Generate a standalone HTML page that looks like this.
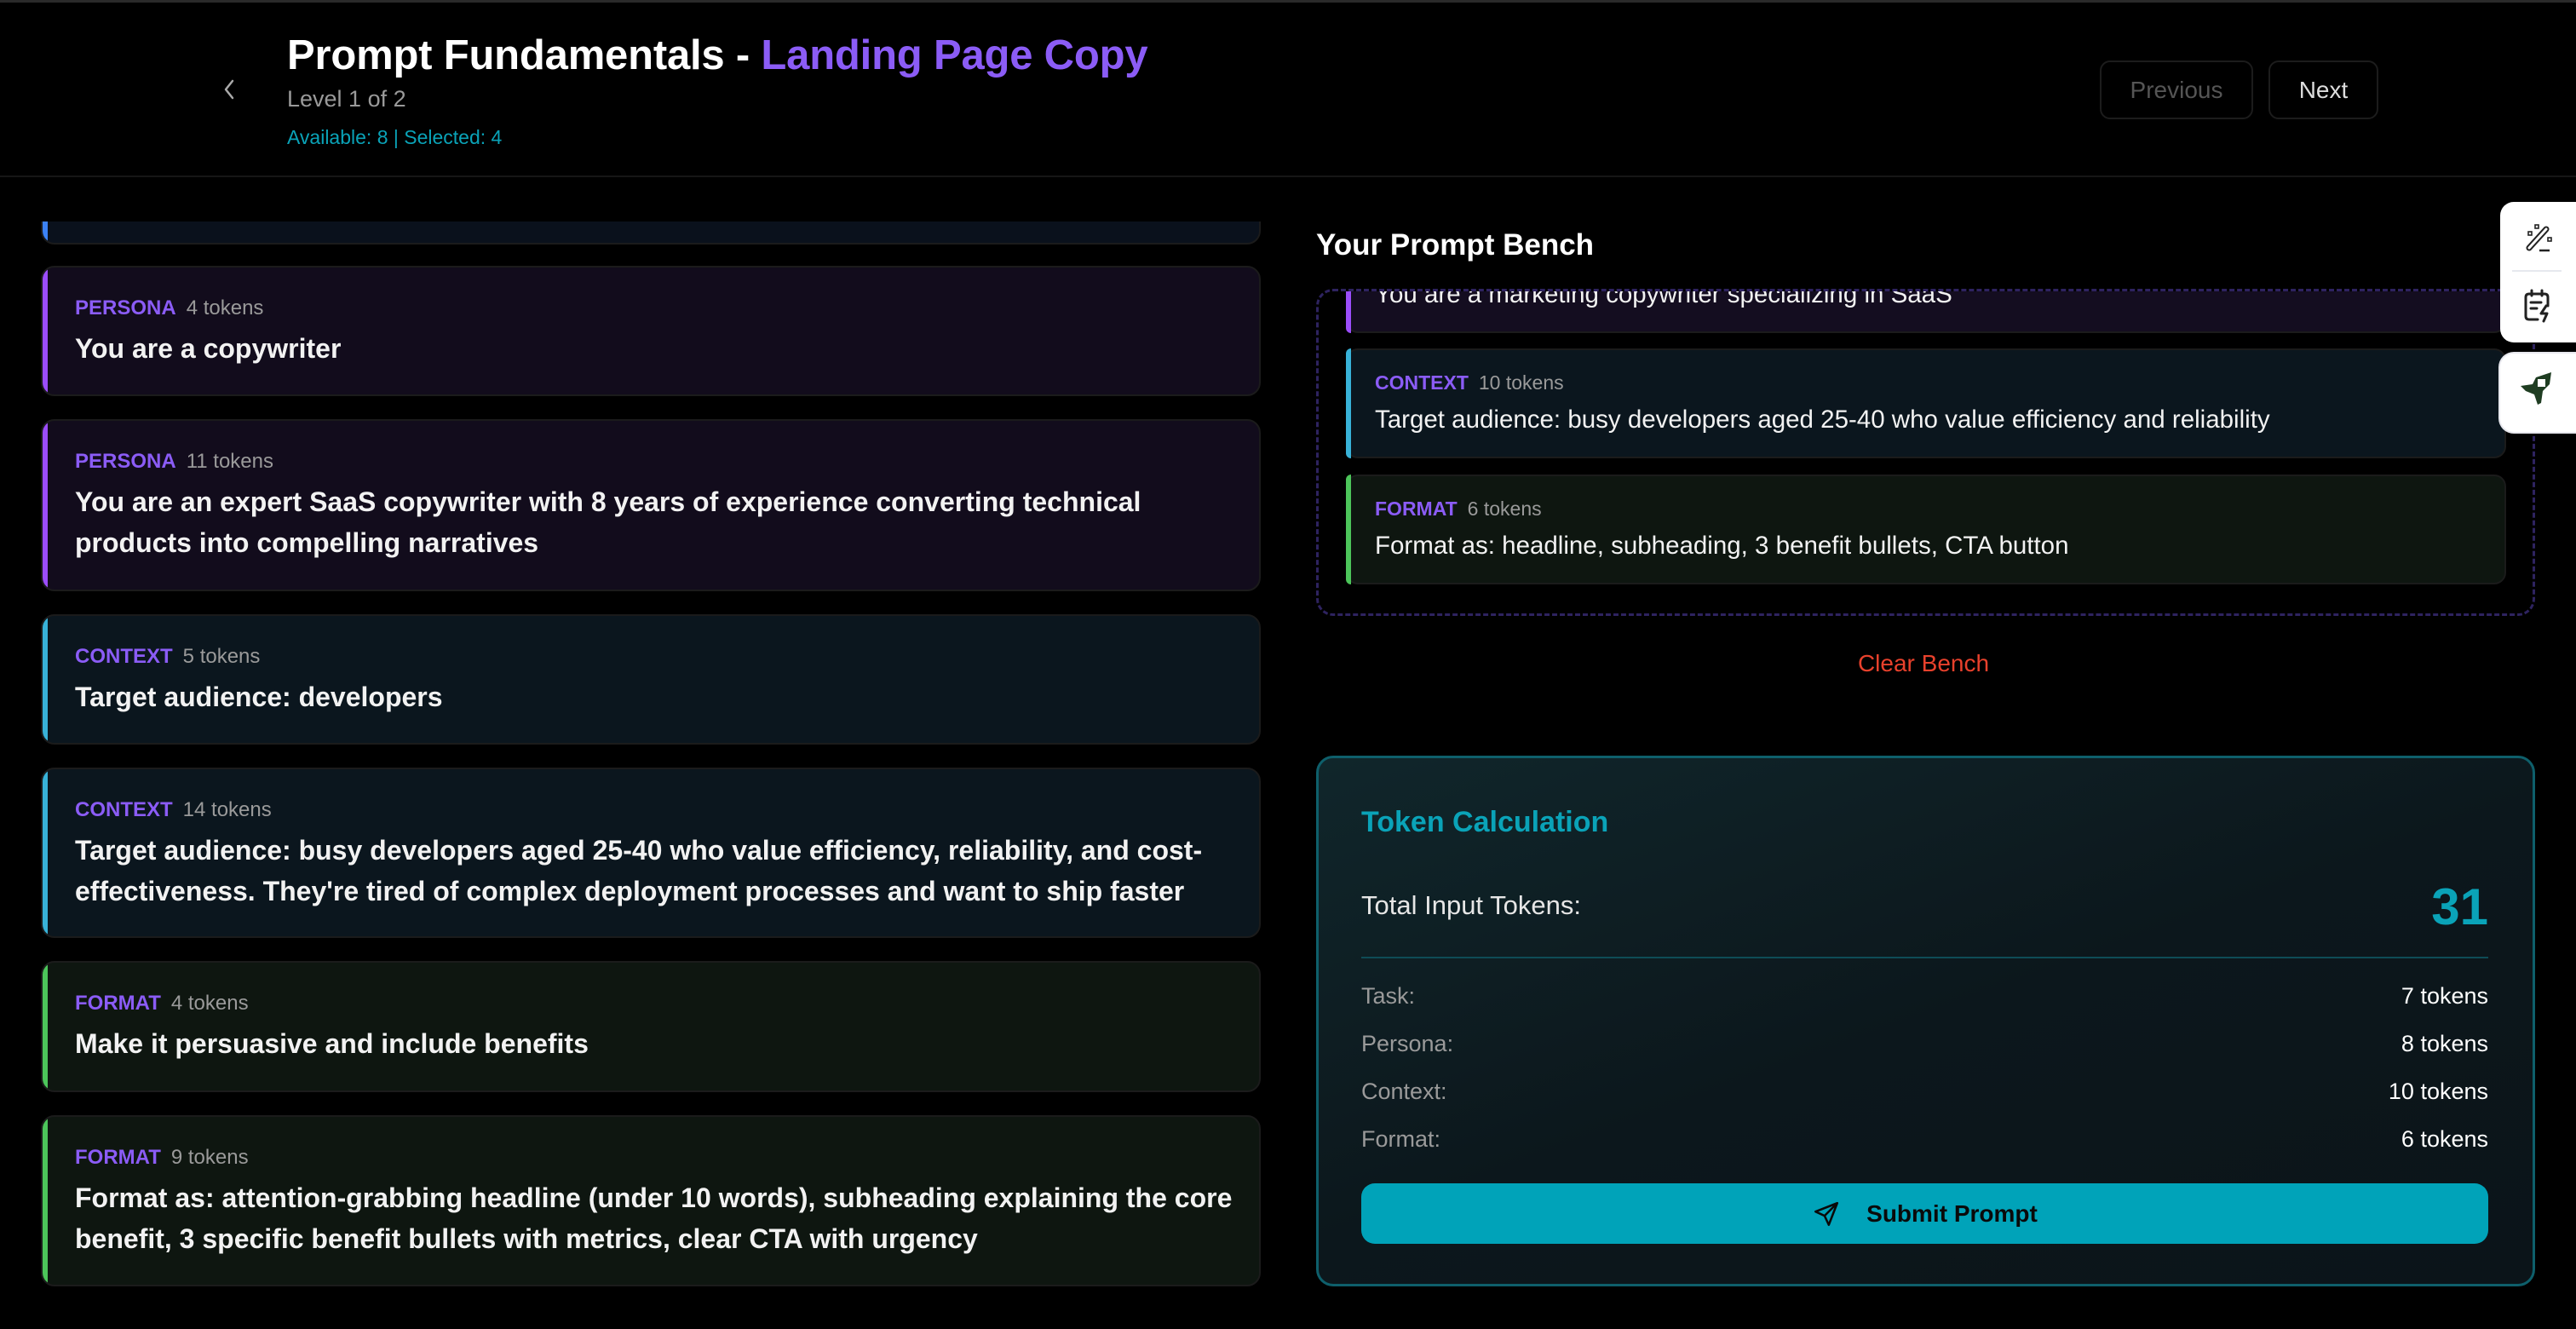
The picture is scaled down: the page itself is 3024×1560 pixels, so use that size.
<!DOCTYPE html>
<html><head><meta charset="utf-8"><style>
*{box-sizing:border-box;margin:0;padding:0}
body{width:3024px;height:1560px;background:#000;overflow:hidden;position:relative;font-family:"Liberation Sans",Arial,sans-serif;color:#fff}
.topline{position:absolute;left:0;top:0;width:3024px;height:3px;background:#2a2a2a}
.hdr{position:absolute;left:0;top:3px;width:3024px;height:205px;border-bottom:2px solid #161616}
.title{position:absolute;left:337px;top:37px;font-size:49px;font-weight:700;letter-spacing:-0.2px;white-space:nowrap}
.title span{color:#8b5cf6}
.lvl{position:absolute;left:337px;top:101px;font-size:27px;color:#9a9a9a}
.avail{position:absolute;left:337px;top:148px;font-size:23px;color:#0aa3b8}
.back{position:absolute;left:258px;top:90px}
.btn{position:absolute;top:71px;height:69px;border:2px solid #1c1c1c;border-radius:12px;font-size:28px;display:flex;align-items:center;justify-content:center}
.col{position:absolute;left:48px;top:260px;width:1432px;height:1300px;overflow:hidden}
.card{position:absolute;left:0;width:1432px;border-radius:16px;border:2px solid #1b1b1b;padding:34px 40px 0 38px;overflow:hidden}
.card:before{content:"";position:absolute;left:0;top:0;bottom:0;width:6px;border-radius:16px 0 0 16px}
.p{background:#120c1c}.p:before{background:#9b4dfa}
.c{background:#0b161e}.c:before{background:#38b2d8}
.f{background:#0e1610}.f:before{background:#4cc55a}
.b{background:#0a111c}.b:before{background:#3b82f6}
.lab{font-size:24px;line-height:28px;white-space:nowrap}
.lab b{color:#8b5cf6;font-weight:700}
.lab i{font-style:normal;color:#9a9a9a;margin-left:12px}
.txt{font-size:32px;font-weight:700;line-height:48px;margin-top:9px;white-space:nowrap;color:#f2f2f2}
.bench-t{position:absolute;left:1545px;top:268px;font-size:35px;font-weight:700}
.bench{position:absolute;left:1545px;top:339px;width:1431px;height:384px;border:3px dashed #2e2360;border-radius:20px;overflow:hidden}
.sc{position:absolute;left:32px;width:1362px;height:129px;border-radius:14px;border:2px solid #1b1b1b;padding:24px 32px 0 32px;overflow:hidden}
.sc .lab{font-size:23px}
.sc .txt{font-size:29.5px;font-weight:400;line-height:40px;margin-top:10px}
.clear{position:absolute;left:2058px;width:400px;top:763px;text-align:center;color:#e8412c;font-size:28px}
.tok{position:absolute;left:1545px;top:887px;width:1431px;height:623px;border:3px solid #0e5f6b;border-radius:20px;background:linear-gradient(160deg,#10262b,#0c171c 50%,#0b1419)}
.tt{position:absolute;left:50px;top:56px;font-size:34px;font-weight:700;color:#0aa3b8}
.tot{position:absolute;left:50px;top:155px;font-size:31px;color:#e6e6e6}
.big{position:absolute;right:52px;top:140px;font-size:60px;font-weight:700;color:#0aa3b8}
.div{position:absolute;left:50px;right:52px;top:233px;height:2px;background:#0e4c56}
.row{position:absolute;left:50px;right:52px;font-size:27px;display:flex;justify-content:space-between}
.row span:first-child{color:#9a9a9a}
.sub{position:absolute;left:50px;right:52px;top:499px;height:71px;border-radius:16px;background:#00a3b9;display:flex;align-items:center;justify-content:center;color:#0a0a0a;font-size:28px;font-weight:700}
.side{position:absolute;left:2935px;background:#fff;border-radius:16px 0 0 16px}
</style></head><body>
<div class="topline"></div>
<div class="hdr"></div>
<svg class="back" width="22" height="30" viewBox="0 0 22 30"><path d="M15 5 L7 15 L15 25" stroke="#aaa" stroke-width="2.5" fill="none" stroke-linecap="round" stroke-linejoin="round"/></svg>
<div class="title">Prompt Fundamentals - <span>Landing Page Copy</span></div>
<div class="lvl">Level 1 of 2</div>
<div class="avail">Available: 8 | Selected: 4</div>
<div class="btn" style="left:2465px;width:180px;color:#555">Previous</div>
<div class="btn" style="left:2663px;width:129px;color:#ddd">Next</div>

<div class="col">
<div class="card b" style="top:-120px;height:147px"></div>
<div class="card p" style="top:52px;height:153px"><div class="lab"><b>PERSONA</b><i>4 tokens</i></div><div class="txt">You are a copywriter</div></div>
<div class="card p" style="top:232px;height:202px"><div class="lab"><b>PERSONA</b><i>11 tokens</i></div><div class="txt">You are an expert SaaS copywriter with 8 years of experience converting technical<br>products into compelling narratives</div></div>
<div class="card c" style="top:461px;height:153px"><div class="lab"><b>CONTEXT</b><i>5 tokens</i></div><div class="txt">Target audience: developers</div></div>
<div class="card c" style="top:641px;height:200px"><div class="lab"><b>CONTEXT</b><i>14 tokens</i></div><div class="txt">Target audience: busy developers aged 25-40 who value efficiency, reliability, and cost-<br>effectiveness. They're tired of complex deployment processes and want to ship faster</div></div>
<div class="card f" style="top:868px;height:154px"><div class="lab"><b>FORMAT</b><i>4 tokens</i></div><div class="txt">Make it persuasive and include benefits</div></div>
<div class="card f" style="top:1049px;height:201px"><div class="lab"><b>FORMAT</b><i>9 tokens</i></div><div class="txt">Format as: attention-grabbing headline (under 10 words), subheading explaining the core<br>benefit, 3 specific benefit bullets with metrics, clear CTA with urgency</div></div>
</div>

<div class="bench-t">Your Prompt Bench</div>
<div class="bench">
<div class="sc" style="top:-80px;background:#140d20"><div class="lab"><b>PERSONA</b><i>8 tokens</i></div><div class="txt">You are a marketing copywriter specializing in SaaS</div></div>
<div class="sc" style="top:67px;background:#0b161e"><div class="lab"><b>CONTEXT</b><i>10 tokens</i></div><div class="txt">Target audience: busy developers aged 25-40 who value efficiency and reliability</div></div>
<div class="sc" style="top:215px;background:#0e1610"><div class="lab"><b>FORMAT</b><i>6 tokens</i></div><div class="txt">Format as: headline, subheading, 3 benefit bullets, CTA button</div></div>
<div style="position:absolute;left:32px;top:-80px;width:6px;height:129px;background:#9b4dfa;border-radius:14px 0 0 14px"></div>
<div style="position:absolute;left:32px;top:67px;width:6px;height:129px;background:#38b2d8;border-radius:14px 0 0 14px"></div>
<div style="position:absolute;left:32px;top:215px;width:6px;height:129px;background:#4cc55a;border-radius:14px 0 0 14px"></div>
</div>
<div class="clear">Clear Bench</div>

<div class="tok">
<div class="tt">Token Calculation</div>
<div class="tot">Total Input Tokens:</div>
<div class="big">31</div>
<div class="div"></div>
<div class="row" style="top:264px"><span>Task:</span><span>7 tokens</span></div>
<div class="row" style="top:320px"><span>Persona:</span><span>8 tokens</span></div>
<div class="row" style="top:376px"><span>Context:</span><span>10 tokens</span></div>
<div class="row" style="top:432px"><span>Format:</span><span>6 tokens</span></div>
<div class="sub"><svg width="34" height="34" viewBox="0 0 24 24" style="margin-right:30px"><path d="M21 3 L3 10 L10.5 13.5 L14 21 Z M21 3 L10.5 13.5" stroke="#0a0a0a" stroke-width="1.8" fill="none" stroke-linejoin="round"/></svg>Submit Prompt</div>
</div>

<div class="side" style="top:237px;width:89px;height:165px">
<svg style="position:absolute;left:24px;top:22px" width="40" height="40" viewBox="0 0 40 40"><path d="M10 32 L30 10" stroke="#222" stroke-width="7" stroke-linecap="round"/><path d="M10 32 L30 10" stroke="#fff" stroke-width="3" stroke-linecap="round"/><path d="M22 35 H34" stroke="#222" stroke-width="2.5"/><rect x="9" y="13" width="4" height="4" stroke="#222" stroke-width="1.6" fill="none"/><rect x="17" y="5" width="4" height="4" stroke="#222" stroke-width="1.6" fill="none"/><rect x="32" y="20" width="4" height="4" stroke="#222" stroke-width="1.6" fill="none"/></svg>
<div style="position:absolute;left:14px;top:80px;width:58px;height:2px;background:#e6e8ee"></div>
<svg style="position:absolute;left:24px;top:100px" width="40" height="44" viewBox="0 0 40 44"><path d="M20 38 H10 Q6 38 6 34 V12 Q6 8 10 8 H28 Q32 8 32 12 V22" stroke="#222" stroke-width="3" fill="none" stroke-linecap="round"/><path d="M13 4 V10 M25 4 V10 M12 18 H24 M12 25 H19" stroke="#222" stroke-width="3" stroke-linecap="round"/><path d="M30 22 L24 31 H31 L27 40" stroke="#222" stroke-width="3" fill="none" stroke-linejoin="round" stroke-linecap="round"/></svg>
</div>
<div class="side" style="top:415px;width:89px;height:92px;box-shadow:0 0 0 2px #e8e8ee">
<svg style="position:absolute;left:24px;top:22px" width="40" height="48" viewBox="0 0 40 48"><path d="M0 16 L14 14 L18 6 L36 0 L34 14 L26 22 L24 36 L20 38 L16 26 L6 22 Z" fill="#1f3d22"/><rect x="20" y="8" width="9" height="9" fill="#fff"/></svg>
</div>
</body></html>
